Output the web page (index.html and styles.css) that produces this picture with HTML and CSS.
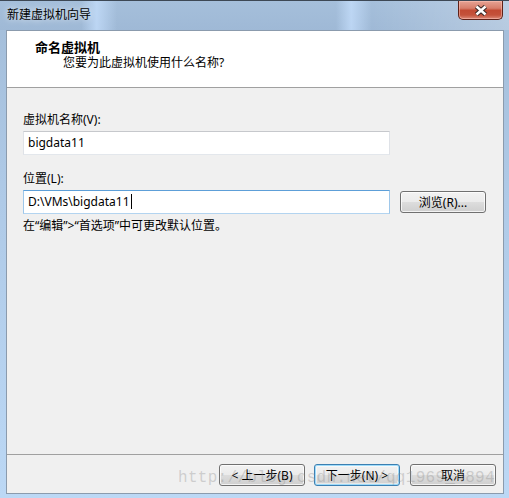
FILE: index.html
```html
<!DOCTYPE html>
<html>
	<head>
		<meta charset="utf-8">
		<link rel="stylesheet" href="styles.css">
	</head>
	<body>
		<section class="window">
			<header class="titlebar">
				<span class="title">新建虚拟机向导</span>
				<div class="close">
					<svg width="14" height="11" viewBox="0 0 14 11">
						<path d="M2.5 1.5 L11.5 9.5 M11.5 1.5 L2.5 9.5" stroke="#3a2a28" stroke-width="4.6" fill="none"/>
						<path d="M2.5 1.5 L11.5 9.5 M11.5 1.5 L2.5 9.5" stroke="#ffffff" stroke-width="2.4" fill="none"/>
					</svg>
				</div>
			</header>

			<div class="client">
				<div class="head">
					<div class="head-title">命名虚拟机</div>
					<div class="head-sub">您要为此虚拟机使用什么名称?</div>
				</div>

				<main class="body">
					<div class="label">虚拟机名称(V):</div>
					<div class="field">bigdata11</div>

					<div class="label second">位置(L):</div>
					<div class="row">
						<div class="field focus">D:\VMs\bigdata11<span class="caret"></span></div>
						<button class="btn browse">浏览(R)...</button>
					</div>
					<div class="hint">在“编辑”&gt;“首选项”中可更改默认位置。</div>
				</main>

				<footer class="foot">
					<button class="btn">&lt; 上一步(B)</button>
					<button class="btn default">下一步(N) &gt;</button>
					<button class="btn cancel">取消</button>
				</footer>
			</div>

			<div class="watermark">http://blog.csdn.net/qq1969_4894</div>
		</section>
	</body>
</html>
```

FILE: styles.css
```css
body {
	margin: 0;
	padding: 0;
	width: 509px;
	height: 498px;
	overflow: hidden;
	font-family: "Noto Sans", "Noto Sans CJK SC", sans-serif;
	font-size: 12px;
	color: #000;
}

.window {
	position: relative;
	height: 498px;
	box-sizing: border-box;
	display: flex;
	flex-direction: column;
	border-top: 1px solid #3d4855;
	background: linear-gradient(180deg, #a3bdd9 0%, #afcae7 40%, #bcd8f5 100%);
}

.titlebar {
	height: 29px;
	display: flex;
	justify-content: space-between;
	align-items: flex-start;
	padding: 0 6px 0 7px;
	background:
		linear-gradient(90deg,
			rgba(255,255,255,0) 0%, rgba(255,255,255,0) 16%,
			rgba(200,225,255,0.7) 19%, rgba(255,255,255,0) 23%,
			rgba(255,255,255,0) 66%,
			rgba(200,225,255,0.7) 69%, rgba(255,255,255,0) 73%,
			rgba(255,255,255,0.25) 100%),
		linear-gradient(180deg, #a5bfdb 0%, #9fb9d6 100%);
}
.title {
	line-height: 28px;
	text-shadow: 0 0 6px rgba(255, 255, 255, 0.9);
}
.close {
	width: 45px;
	height: 19px;
	box-sizing: border-box;
	display: flex;
	align-items: center;
	justify-content: center;
	border: 1px solid #5e2118;
	border-top: none;
	border-radius: 0 0 5px 5px;
	background: linear-gradient(180deg, #e6a394 0%, #d77e6b 40%, #c24a33 52%, #c4523b 78%, #dc8a78 100%);
	box-shadow: inset 0 0 0 1px rgba(255, 200, 190, 0.5);
}

.client {
	flex: 1;
	margin: 0 5px 4px 6px;
	border: 1px solid #8b9bad;
	display: flex;
	flex-direction: column;
	background-color: #f0f0f0;
}

.head {
	height: 57px;
	box-sizing: border-box;
	padding: 8px 0 0 28px;
	background-color: #fff;
	border-bottom: 1px solid #a0a0a0;
}
.head-title {
	font-weight: bold;
	font-size: 13px;
	line-height: 16px;
}
.head-sub {
	line-height: 16px;
	margin-left: 28px;
}

.body {
	flex: 1;
	padding: 24px 0 0 16px;
}
.label {
	line-height: 16px;
	margin-bottom: 3px;
}
.label.second {
	margin-top: 16px;
}
.field {
	width: 367px;
	height: 24px;
	box-sizing: border-box;
	padding-left: 4px;
	line-height: 22px;
	background-color: #fff;
	border: 1px solid;
	border-color: #c6c8cc #dfe2e7 #e3e7ec #dfe2e7;
}
.field.focus {
	border-color: #5d9fd8 #9ec7ea #b3d4f0 #9ec7ea;
}
.caret {
	display: inline-block;
	width: 1px;
	height: 15px;
	margin-left: 1px;
	vertical-align: -3px;
	background-color: #000;
}
.row {
	display: flex;
	align-items: center;
	gap: 10px;
}
.hint {
	line-height: 16px;
	margin-top: 4px;
}

.btn {
	width: 86px;
	height: 22px;
	padding: 0;
	font-family: inherit;
	font-size: 12px;
	color: #000;
	border: 1px solid #707070;
	border-radius: 3px;
	background: linear-gradient(180deg, #f2f2f2 0%, #ebebeb 50%, #dddddd 50%, #cfcfcf 100%);
	box-shadow: inset 0 0 0 1px rgba(255, 255, 255, 0.75);
}
.btn.default {
	border-color: #3c7fb1;
	box-shadow: inset 0 0 0 1px #9fdcfb, inset 0 0 0 2px rgba(255, 255, 255, 0.5);
}

.foot {
	height: 39px;
	box-sizing: border-box;
	display: flex;
	justify-content: flex-end;
	align-items: flex-start;
	gap: 9px;
	padding: 9px 7px 0 0;
	border-top: 1px solid #a0a0a0;
}
.btn.cancel {
	margin-left: 1px;
}

.watermark {
	position: absolute;
	left: 178px;
	top: 467px;
	font-family: "Liberation Mono", monospace;
	font-size: 16px;
	letter-spacing: 0.3px;
	line-height: 20px;
	color: rgba(140, 140, 140, 0.35);
	pointer-events: none;
}
```
